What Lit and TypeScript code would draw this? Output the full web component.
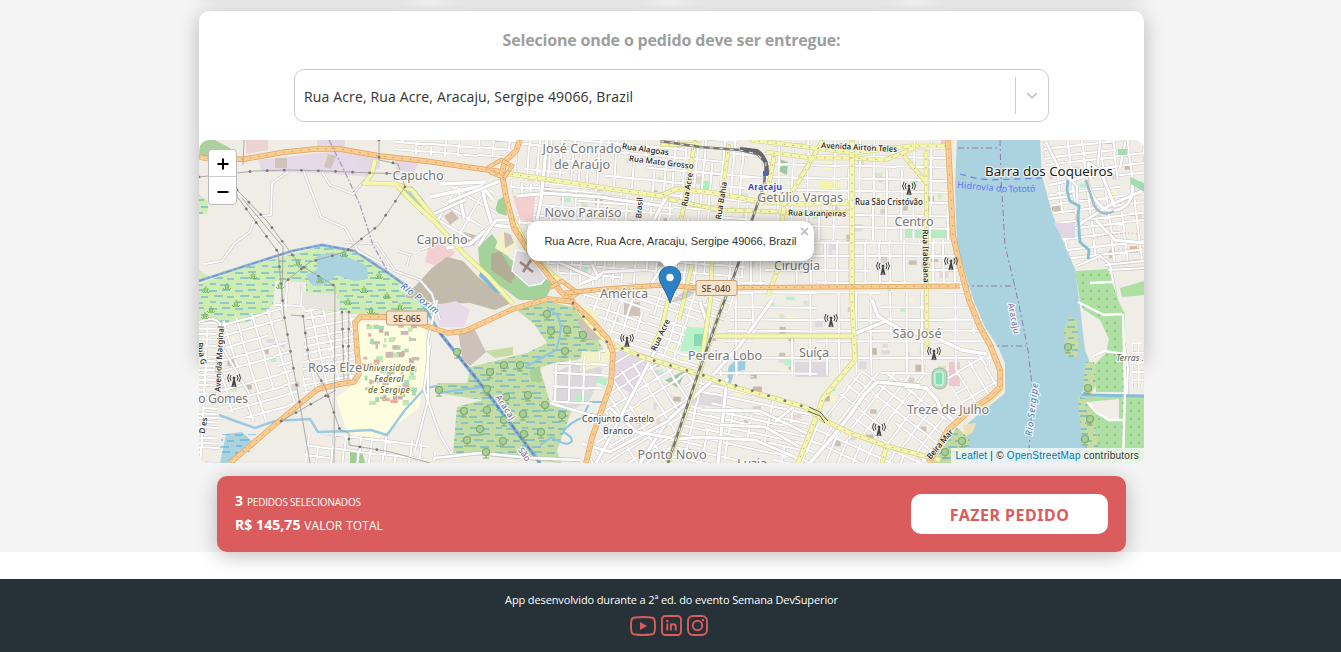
import { LitElement, html, svg, css } from "lit";
import { customElement } from "lit/decorators.js";

type Zone = { p: string; a: number; sx: number; sy: number; seed: number };
type Road = { d: string; w: number };
type Label = { t: string; x: number; y: number; k?: string; r?: number; l?: number };

const random = (seed: number) => () => {
  seed = (seed * 1664525 + 1013904223) % 4294967296;
  return seed / 4294967296;
};

const zones: Zone[] = [
  { p: "395,140 520,140 500,160 395,153", a: 4, sx: 13, sy: 9, seed: 1 },
  { p: "522,140 735,140 766,160 755,215 728,212 510,178", a: 5, sx: 10, sy: 11, seed: 2 },
  { p: "510,181 755,214 742,284 575,285 545,262 518,222", a: 4, sx: 12, sy: 9, seed: 3 },
  { p: "775,140 947,140 954,240 780,240 760,190", a: 1, sx: 14, sy: 12, seed: 4 },
  { p: "750,240 953,240 962,285 735,285", a: 0, sx: 13, sy: 13, seed: 5 },
  { p: "738,292 972,292 1000,365 927,375 852,375 715,378", a: 0, sx: 16, sy: 14, seed: 6 },
  { p: "578,291 738,291 700,370 615,340", a: 18, sx: 12, sy: 8, seed: 7 },
  { p: "612,345 697,376 667,463 590,463 605,415", a: -32, sx: 12, sy: 10, seed: 8 },
  { p: "697,378 812,412 797,463 668,463", a: 12, sx: 18, sy: 8, seed: 9 },
  { p: "858,372 927,376 950,428 925,463 905,453 823,415", a: -52, sx: 12, sy: 12, seed: 10 },
  { p: "814,420 925,463 798,463", a: 24, sx: 12, sy: 10, seed: 11 },
  { p: "945,378 980,352 1000,372 992,395 965,408", a: -30, sx: 13, sy: 9, seed: 12 },
  { p: "1042,140 1144,140 1144,262 1070,262 1052,210", a: -7, sx: 16, sy: 9, seed: 13 },
  { p: "218,322 280,306 300,400 262,425 215,405", a: -16, sx: 14, sy: 10, seed: 14 },
  { p: "305,308 354,312 354,380 318,388 302,395", a: -12, sx: 12, sy: 9, seed: 15 },
  { p: "305,434 365,436 420,440 450,463 305,463", a: 7, sx: 12, sy: 11, seed: 16 },
  { p: "199,320 216,318 219,463 199,463", a: 3, sx: 22, sy: 5, seed: 17 },
  { p: "275,283 300,281 304,308 275,308", a: 3, sx: 5, sy: 30, seed: 18 },
  { p: "553,364 605,350 610,380 590,405 552,404", a: 3, sx: 17, sy: 14, seed: 19 },
  { p: "444,190 480,178 505,205 470,240 435,222", a: 30, sx: 22, sy: 17, seed: 20 },
  { p: "1132,342 1144,342 1144,388 1132,388", a: 0, sx: 6, sy: 9, seed: 21 },
];

/* Streets of one district: two families of nearly parallel lines with some segments left out. */
const streetPath = (z: Zone) => {
  const pts = z.p.split(" ").map((q) => q.split(",").map(Number));
  const xs = pts.map((q) => q[0]);
  const ys = pts.map((q) => q[1]);
  const cx = (Math.min(...xs) + Math.max(...xs)) / 2;
  const cy = (Math.min(...ys) + Math.max(...ys)) / 2;
  const r = Math.hypot(Math.max(...xs) - cx, Math.max(...ys) - cy) + 20;
  const rnd = random(z.seed * 977);
  const t = (z.a * Math.PI) / 180;
  const at = (x: number, y: number) =>
    `${(cx + x * Math.cos(t) - y * Math.sin(t)).toFixed(1)} ${(cy + x * Math.sin(t) + y * Math.cos(t)).toFixed(1)}`;
  const out: string[] = [];
  for (let y = -r; y < r; y += z.sy * (0.75 + rnd() * 0.5)) {
    for (let x = -r; x < r; x += z.sx * 4) {
      if (rnd() > 0.12) out.push(`M${at(x, y)}L${at(x + z.sx * 4, y + rnd() * 1.2)}`);
    }
  }
  for (let x = -r; x < r; x += z.sx * (0.75 + rnd() * 0.5)) {
    for (let y = -r; y < r; y += z.sy * 3) {
      if (rnd() > 0.2) out.push(`M${at(x, y)}L${at(x + rnd() * 1.2, y + z.sy * 3)}`);
    }
  }
  return out.join("");
};

const lanes: Road[] = [
  { d: "M205 264 L222 261 L235 243 L250 232 L255 217 L271 215 L272 183 L288 172 M304 172 L321 217 L345 228 L358 251 L395 271 L420 280 L432 294 L440 320", w: 1.8 },
  { d: "M322 172 L330 185 L353 194 L365 180 M345 242 L377 244 L395 271 M398 251 L410 255 L407 266 M420 250 L437 244", w: 1.6 },
  { d: "M199 322 Q215 315 220 324 L224 345 L216 372 M224 350 L250 395 M437 300 L428 340 L428 400 L415 450 M430 345 L424 390 L440 435 L452 455", w: 2 },
  { d: "M430 197 L482 186 L493 200 M440 184 L485 182 M486 205 L492 225 L470 244 L447 248 M492 225 L510 227 M458 188 L464 218 M482 187 L486 205", w: 3.4 },
  { d: "M448 202 L500 181 M431 215 L465 200 M478 246 L496 220 L515 220", w: 3 },
  { d: "M547 140 L541 200 L537 220 M543 193 L600 197 L662 206 M517 196 L540 194 M665 199 L654 220", w: 3.2 },
  { d: "M558 262 L596 279 L603 272 L640 270 M592 264 L598 277 L580 284 M660 270 L650 286 M700 302 L712 338", w: 3 },
  { d: "M872 300 L878 316 L886 321 L905 332 L930 335 L962 350 L986 354 M886 321 L854 334", w: 3.4 },
  { d: "M877 382 L864 395 L850 415 L830 440 L810 463 M877 382 L920 386 M905 386 L926 388 L937 400 L941 410 L955 422", w: 3.6 },
  { d: "M772 300 L740 345 L713 375 M727 378 L718 463 M715 378 L668 420 L640 463", w: 3.2 },
  { d: "M701 410 L760 411 L808 434 M720 425 L765 427 L798 446 M775 422 L792 408 M670 440 L700 437 L755 440 L795 457", w: 2.8 },
  { d: "M655 351 L640 380 L624 410 L609 440 L596 463 M610 408 L637 432 L672 438 M583 444 L610 452 L670 420", w: 3 },
  { d: "M435 458 L480 453 L530 458 L580 460 M550 403 L590 415 L640 422", w: 2.6 },
  { d: "M1077 266 L1100 256 L1110 264 L1128 368 L1123 463 M1078 302 L1104 315 L1122 314 M1093 356 L1105 351 L1124 354 M1087 402 L1096 412 L1109 420 L1123 420 M1105 265 L1144 261 M1108 270 L1144 268", w: 2.2 },
  { d: "M1091 179 Q1082 150 1102 175 L1115 207 M1132 180 Q1136 208 1112 211 Q1096 210 1086 180 M1078 225 L1110 205 L1144 190 M1096 220 L1115 240 L1144 243", w: 3 },
  { d: "M1050 185 L1085 177 M1048 199 L1072 196 M1046 142 L1060 170 L1077 186 L1078 222 M1100 143 L1098 164 M1125 143 L1120 168", w: 2.4 },
];

const yellow: Road[] = [
  { d: "M375 160 L372 173 L365 183 L396 184 L412 190 L426 208 L438 223", w: 3.8 },
  { d: "M397 186 L418 207 L436 223 L464 254 L488 276 L513 304", w: 3.8 },
  { d: "M503 173 L545 179 L605 188 L660 196 L676 189 L715 193 L757 201 L800 204 L852 203", w: 4 },
  { d: "M668 199 L720 210 L758 211 L800 213 L852 212", w: 3.2 },
  { d: "M510 212 L528 248 L545 268 L562 282", w: 3.2 },
  { d: "M660 145 L702 144 M695 140 L691 165 L684 205 L681 220 M729 144 L724 180 L718 220", w: 3.2 },
  { d: "M750 140 L815 148 L854 153 L910 146 L948 146 M765 152 L812 158 L852 158 L885 160 L905 152 L918 146 M823 140 L811 160 L799 181 L784 205 L781 235 L776 275 L768 295", w: 3.4 },
  { d: "M774 156 L770 180 L760 205 M926 150 L927 350 M903 155 L925 181", w: 3.4 },
  { d: "M852 140 L852 300 L855 360 L838 380 L823 398 L815 420 L798 463", w: 4 },
  { d: "M715 336 L853 336 M712 289 L700 372 L668 463", w: 3.6 },
  { d: "M668 300 L661 330 L651 350 M692 265 L679 320 M712 262 L711 285", w: 3.2 },
  { d: "M573 303 L590 325 L607 342 L642 357 L670 365 L699 374 L730 386 L805 407 L824 420 L850 433 L890 447 L940 460 M886 448 L882 463", w: 3.8 },
  { d: "M699 374 L708 347 L724 300", w: 3.4 },
];

const orange: Road[] = [
  { d: "M199 157 L216 160 L245 159 L285 152 L315 149 L340 149 L380 156 L425 161 L460 166 L503 172", w: 4.2 },
  { d: "M520 140 L516 151 L505 161 L502 173 L506 197 L514 228 L530 253 L549 276 L560 291 L573 303 L592 321 L608 339 L613 353 L611 383 L601 412 L592 438 L586 463", w: 4.4 },
  { d: "M487 168 L501 160 L512 166 L504 178 L490 172 M550 288 L562 281 L578 293 L565 302", w: 3 },
  { d: "M230 463 L278 422 L318 389 L340 384 L354 382 L359 374 L355 323 L360 317 L398 317 L432 328 L448 333 L465 331 L513 309 L548 299 L575 302", w: 4.2 },
  { d: "M565 293 L605 289 L662 285 L700 288 L960 286", w: 3.6 },
  { d: "M948 140 L950 180 L953 236 L961 270 L969 300 L980 327 L990 345 L1000 370 L1000 387 L990 397 L970 410 L948 430 L929 463", w: 4.6 },
];

const labels: Label[] = [
  { t: "José Conrado", x: 582, y: 153, l: 79 }, { t: "de Araújo", x: 582, y: 169, l: 56 },
  { t: "Capucho", x: 418, y: 180, l: 51 }, { t: "Capucho", x: 442, y: 244, l: 51 },
  { t: "Novo Paraíso", x: 583, y: 217, l: 77 }, { t: "Getúlio Vargas", x: 800, y: 202, l: 86 },
  { t: "Centro", x: 914, y: 226, l: 39 }, { t: "Cirurgia", x: 797, y: 270, l: 46 },
  { t: "América", x: 624, y: 298, l: 48 }, { t: "Pereira Lobo", x: 725, y: 360, l: 74 },
  { t: "Suíça", x: 814, y: 357, l: 30 }, { t: "São José", x: 917, y: 338, l: 49 },
  { t: "Treze de Julho", x: 948, y: 414, l: 82 }, { t: "Ponto Novo", x: 672, y: 459, l: 69 },
  { t: "Rosa Elze", x: 335, y: 372, l: 54 }, { t: "o Gomes", x: 223, y: 403, l: 50 },
  { t: "Luzia", x: 752, y: 468, l: 30 },
  { t: "Barra dos Coqueiros", x: 1049, y: 176, k: "town", l: 128 },
  { t: "Conjunto Castelo", x: 618, y: 422, k: "dark", l: 72 }, { t: "Branco", x: 618, y: 434, k: "dark", l: 30 },
  { t: "Rua Alagoas", x: 645, y: 152, k: "street", r: 8 }, { t: "Rua Mato Grosso", x: 661, y: 165, k: "street", r: 7, l: 65 },
  { t: "Avenida Airton Teles", x: 859, y: 150, k: "street", r: 3, l: 76 },
  { t: "Rua São Cristóvão", x: 889, y: 205, k: "street", l: 68 }, { t: "Rua Laranjeiras", x: 817, y: 216, k: "street", l: 58, r: 1 },
  { t: "Rua Acre", x: 690, y: 190, k: "street", r: -80, l: 34 }, { t: "Rua Bahia", x: 724, y: 201, k: "street", r: -81, l: 38 },
  { t: "Brasil", x: 642, y: 208, k: "street", r: -86, l: 21 }, { t: "Rua Acre", x: 663, y: 336, k: "street", r: -65, l: 34 },
  { t: "Rua Itabaiana", x: 923, y: 256, k: "street", r: 89, l: 53 }, { t: "Beira Mar", x: 942, y: 446, k: "street", r: -50, l: 36 },
  { t: "Avenida Marginal", x: 222, y: 359, k: "street", r: -87, l: 66 }, { t: "Rua G", x: 199, y: 354, k: "street", r: 80 },
  { t: "D es", x: 206, y: 426, k: "street", r: -80 },
  { t: "Universidade", x: 389, y: 371, k: "campus", l: 52 }, { t: "Federal", x: 389, y: 382, k: "campus", l: 29 }, { t: "de Sergipe", x: 389, y: 393, k: "campus", l: 42 },
  { t: "Aracaju", x: 765, y: 190, k: "station", l: 34 },
  { t: "Hidrovia do", x: 982, y: 190, k: "ferry", r: 5, l: 50 }, { t: "Tototó", x: 1022, y: 192, k: "ferry", r: -1, l: 27 },
  { t: "Rio Sergipe", x: 1035, y: 410, k: "water", r: -83, l: 53 }, { t: "Rio Poxim", x: 418, y: 301, k: "water", r: 37, l: 45 },
  { t: "Aracaju", x: 1011, y: 319, k: "limit", r: 79, l: 31 }, { t: "Aracaj", x: 503, y: 409, k: "limit", r: 56, l: 28 }, { t: "São", x: 522, y: 456, k: "limit", r: 55 },
  { t: "Terras .", x: 1130, y: 361, k: "place" },
];

const trees = [[547, 315], [551, 332], [567, 331], [583, 336], [565, 352], [504, 366], [520, 366], [490, 373], [506, 398], [528, 396], [545, 406], [562, 416], [464, 412], [487, 411], [504, 421], [523, 415], [480, 430], [467, 441], [503, 442], [524, 435], [541, 433], [486, 453], [487, 390], [457, 353], [1068, 348], [1088, 389], [1090, 420], [1085, 440], [945, 453], [962, 442], [439, 391]];
const masts = [[909, 188], [883, 268], [831, 320], [627, 340], [951, 263], [934, 353], [879, 429], [234, 380]];
const grass = [[206, 289], [227, 286], [280, 285], [253, 275], [320, 279], [379, 275], [364, 289], [387, 295], [344, 253], [298, 262], [211, 309], [236, 303], [400, 306], [348, 301], [371, 310], [205, 315]];

const line = (r: Road, fill: string, edge: string) => svg`
  <path d=${r.d} fill="none" stroke=${edge} stroke-width=${r.w + 1.2}></path>
  <path d=${r.d} fill="none" stroke=${fill} stroke-width=${r.w}></path>`;

const blocks = () => {
  const rnd = random(4211);
  const tints = ["#d9d0c9", "#ccc0b6", "#e9d6d4", "#d7e8c6", "#f7f7c4", "#dedbe0", "#c8b8aa", "#b9f0cc"];
  const areas = [[530, 145, 220, 130], [775, 145, 165, 310], [600, 300, 120, 150], [735, 295, 90, 130], [222, 325, 110, 80], [1048, 145, 90, 110]];
  return areas.flatMap(([x, y, w, h]) =>
    Array.from({ length: Math.round((w * h) / 750) }, () => svg`<rect x=${(x + rnd() * w).toFixed(1)} y=${(y + rnd() * h).toFixed(1)}
      width=${(3 + rnd() * 6).toFixed(1)} height=${(3 + rnd() * 5).toFixed(1)} fill=${tints[Math.floor(rnd() * tints.length)]}></rect>`));
};

const campus = () => {
  const rnd = random(88);
  return Array.from({ length: 70 }, () => svg`<rect x=${(362 + rnd() * 50).toFixed(1)} y=${(323 + rnd() * 78).toFixed(1)}
    width=${(2 + rnd() * 6).toFixed(1)} height=${(2 + rnd() * 4).toFixed(1)} fill=${["#ccbcae", "#c6b3a6", "#f5a9a0", "#bfe8b5", "#a8dab5"][Math.floor(rnd() * 5)]}></rect>`);
};

@customElement("street-map")
export class StreetMap extends LitElement {
  static styles = css`
    :host { display: block; width: 945px; height: 323px; }
    svg { display: block; }
    text {
      font-family: "Noto Sans", "Open Sans", sans-serif;
      font-size: 12.6px; fill: #777; text-anchor: middle;
      paint-order: stroke; stroke: #fff; stroke-opacity: 0.75; stroke-width: 2.6px; stroke-linejoin: round;
    }
    .town { font-size: 13.4px; fill: #222; }
    .dark { font-size: 9px; fill: #333; }
    .street { font-size: 8px; fill: #222; stroke-opacity: 0.55; stroke-width: 2px; font-weight: 500; }
    .campus { font-size: 8.6px; fill: #6b6322; font-style: italic; font-weight: 500; }
    .station { font-size: 9px; fill: #3f49b5; font-weight: 700; }
    .ferry { font-size: 9px; fill: #6672f0; stroke-width: 0; }
    .water { font-size: 9.4px; fill: #4377b5; font-style: italic; }
    .limit { font-size: 8.6px; fill: #80609a; }
    .place { font-size: 8.6px; fill: #555; font-style: italic; }
    .shield { font-size: 9px; fill: #58402a; stroke: none; font-weight: 500; }
  `;

  render() {
    return html`<svg width="945" height="323" viewBox="199 140 945 323">
      <defs>
        <pattern id="marsh" width="26" height="18" patternUnits="userSpaceOnUse">
          <path d="M1 3H9M14 2H22M6 8H15M19 9H26M2 14H8M12 15H21" stroke="#4da6dd" stroke-width="1"></path>
        </pattern>
        <pattern id="orchard" width="8" height="8" patternUnits="userSpaceOnUse">
          <circle cx="3" cy="3" r=".8" fill="#6ba657"></circle>
        </pattern>
        <g id="grass"><path d="M-4 2L-2 4M-2-1L-1 4M0-3V4M2-1L1 4M4 2L2 4" stroke="#74b75a" stroke-width="1"></path></g>
        <g id="tree"><circle r="3.5" cy="-1" fill="#a8cf98" stroke="#7fab70" stroke-width="1.2"></circle><path d="M0 2V5M-3 5H3" stroke="#7fab70" stroke-width="1.1"></path></g>
        <g id="mast" fill="none" stroke="#444" stroke-width="1"><path d="M0-3V7M-2 7L0-1L2 7" stroke-width="1.2"></path><circle cy="-2" r="1" fill="#444"></circle><path d="M-3-5Q-5-2-3 1M3-5Q5-2 3 1M-5-6Q-8-2-5 2M5-6Q8-2 5 2"></path></g>
        ${zones.map((z) => svg`<clipPath id=${"z" + z.seed}><polygon points=${z.p}></polygon></clipPath>`)}
      </defs>
      <rect x="199" y="140" width="945" height="323" fill="#f0ede6"></rect>

      <path d="M199 158L213 163L234 160L230 148L215 140H200Z" fill="#add19e"></path>
      <path d="M246 140H268V150L246 154Z" fill="#ecd3d3"></path>
      <path d="M258 160L340 151L378 158L371 177L322 173L262 172Z" fill="#e5d9e7"></path>
      <path d="M275 158H287V168H275ZM328 154L336 156L331 169L324 167Z" fill="#d0c3b9"></path>
      <path d="M317 140H345V148L317 146ZM356 150L380 154V169L356 166ZM395 156L420 161L414 172L396 170Z" fill="#e3d9e6"></path>
      <path d="M430 238L455 252L443 268L425 262ZM660 140H680V150H660Z" fill="#f3cfd0"></path>
      <path d="M403 188L412 187L423 200L430 215L422 214Z" fill="#aad3df" stroke="#7cb0cf"></path>

      <path d="M199 195L209 201L207 214H199ZM199 284L245 267L322 246L360 254L390 275L420 297L438 310L425 318L345 313L306 308V282L275 281L273 305L262 316L244 323H199Z" fill="#cfecb3"></path>
      <path d="M199 195L209 201L207 214H199ZM199 284L245 267L322 246L360 254L390 275L420 297L438 310L425 318L345 313L306 308V282L275 281L273 305L262 316L244 323H199Z" fill="url(#marsh)"></path>
      <path d="M302 292L337 294L340 311L304 308Z" fill="#e8e5df"></path>
      <path d="M199 270L210 277L199 281Z" fill="#cfecb3"></path>
      <path d="M306 275L318 269L316 257Q335 248 350 258L367 266L368 279L355 281L336 275Q325 289 312 285Z" fill="#aad3df"></path>
      <path d="M199 281L245 266L292 251L322 245L355 251L388 273L415 292L440 333L483 387L540 463" fill="none" stroke="#84b5da" stroke-width="2.8"></path>
      <path d="M199 281L245 266L292 251L322 245L355 251L388 273L415 292" fill="none" stroke="#8461a0" stroke-opacity=".5" stroke-width="1.2" stroke-dasharray="6 3 2 3"></path>

      <path d="M405 297L432 268L447 257L463 261L478 277L511 303L495 310L470 303L435 304Z" fill="#c2baaa"></path>
      <path d="M434 306L456 301L470 310L464 327L440 327Z" fill="#e7dbe8"></path>
      <path d="M458 331L474 328L486 352L470 366L462 358Z" fill="#cdc1ba"></path>
      <path d="M478 247L492 234L510 259L540 274L553 284L545 300L519 300L480 270Z" fill="#a3d29b"></path>
      <path d="M491 254L500 251L515 275L511 284L491 270Z" fill="#b4ad95"></path>
      <path d="M481 270L511 298L495 292L479 276Z" fill="#7fb6dc"></path>
      <path d="M516 250L527 252L546 278L541 284L529 286L512 271Z" fill="#dfdce0" stroke="#fff" stroke-width="1.3"></path>
      <path d="M520 262L533 272M531 260L523 272" stroke="#9b8680" stroke-width="2.6"></path>
      <path d="M500 234L507 231L517 243L508 256L495 248Z" fill="#f5f1c8"></path>
      <path d="M504 232L511 235L514 243L505 248ZM444 216L452 211L459 218L450 225ZM464 232L478 236L474 246L460 240Z" fill="#cdbfb4"></path>
      <circle cx="492" cy="225" r="3.4" fill="#9edbb0" stroke="#fff" stroke-width="1.6"></circle>
      <path d="M498 200L505 196L507 216L495 212Z" fill="#a3d29b"></path>

      <path d="M358 322L420 320L427 334V365L419 408L378 438L348 435L336 398L352 386L360 374Z" fill="#fffde0"></path>
      ${campus()}
      <path d="M226 434L242 432L253 442L244 452L228 463H220Z" fill="#aad3df"></path>
      <path d="M222 434L262 434L250 452L228 458L219 452Z" fill="url(#marsh)"></path>
      <path d="M219 415L238 422L255 428L275 421L310 419L318 432L352 431L371 430L387 435L405 410L425 388L437 386" fill="none" stroke="#9bcbe0" stroke-width="2.4"></path>
      <path d="M350 452L361 448L365 463H350Z" fill="#a3cf95"></path>

      <path d="M517 310L547 301L580 309L603 349L577 360L553 363L540 368L550 403L573 407L557 450L561 463L453 453L457 407L483 400L437 393L437 383L467 383L470 367L527 353L547 343L535 325Z" fill="#c4dda4"></path>
      <path d="M485 351L513 347L513 355L495 358Z" fill="#c4dda4"></path>
      <path d="M517 310L547 301L580 309L603 349L577 360L553 363L540 368L550 403L573 407L557 450L561 463L453 453L457 407L483 400L437 393L437 383L467 383L470 367L527 353L547 343L535 325Z" fill="url(#marsh)"></path>
      <path d="M547 307L558 316Q564 328 556 350L525 367M437 393L483 387M540 445L552 437Q567 448 572 441Q572 436 563 432Q570 422 582 418L590 402H604" fill="none" stroke="#8ec5e2" stroke-width="2"></path>
      <path d="M440 333L483 387L540 463" stroke="#76acd9" stroke-width="3.6" fill="none"></path>
      <path d="M440 333L483 387L540 463" stroke="#79649a" stroke-width="1.2" stroke-dasharray="5 3 2 3" fill="none"></path>
      <path d="M530 370L540 366L541 383L531 381Z" fill="#a9d097"></path>
      <path d="M556 372L578 362L603 368L590 400L576 408L552 403Z" fill="#dcd9dc"></path>
      <path d="M615 345L650 356L632 395L608 378Z" fill="#e5d7e6"></path>
      <path d="M577 320L590 315L605 340L585 339ZM624 302H640V316H624Z" fill="#cfc2bc"></path>
      <path d="M577 307L598 309V334L588 325ZM582 351L606 352L604 365L580 372Z" fill="#f5f2c8"></path>
      <path d="M576 395L588 394V404L575 405ZM598 376L608 379L605 386L596 382Z" fill="#b5f0c6"></path>

      ${blocks()}
      <path d="M665 380L686 370L678 388ZM779 159L788 162L787 175L778 171Z" fill="#9ccaa2"></path>
      <path d="M700 181H712V192H700Z" fill="#aaf0c1"></path>
      <path d="M820 181H839V190H820Z" fill="#f6f4ac"></path>
      <path d="M905 230H949V238H905Z" fill="#b6ecc1"></path>
      <path d="M795 362H829V377H795ZM694 393L724 395L720 407L690 404Z" fill="#dcdadd"></path>
      <path d="M729 366L746 352L745 370L734 372L731 383H727L728 370Z" fill="#9bcce2"></path>
      <path d="M949 362H960V386H949ZM941 140H945V146H941Z" fill="#f2c7cb"></path>

      ${zones.map((z) => svg`<g clip-path=${`url(#z${z.seed})`} fill="none">
        <path d=${streetPath(z)} stroke="#cbc7c7" stroke-width="3.1"></path>
        <path d=${streetPath(z)} stroke="#fff" stroke-width="2.1"></path>
      </g>`)}
      <path d="M513 196L535 197L533 222L520 220Z" fill="#f3cfd0"></path>
      <path d="M687 327L711 328L703 353L680 351Z" fill="#b7f2ca"></path>
      <path d="M694 334H704V346H694Z" fill="#8bd9b0"></path>
      ${lanes.map((r) => line(r, "#fff", "#c9c6c6"))}

      <path d="M957 140H1040L1042 176L1052 213L1062 239L1075 269L1080 307L1085 350L1090 363L1082 393L1082 433L1088 463H962L965 447L968 423L988 407L1005 393V363L998 347L985 327L973 299L957 246L955 186Z" fill="#aad3df"></path>
      <path d="M963 425L976 423L973 432L965 437ZM965 408L990 397L998 388L1004 390L987 406L968 416Z" fill="#efdfb4"></path>
      <path d="M957 427L970 440L968 463H933Z" fill="#c2d99f"></path>
      <path d="M1075 271L1108 269L1118 300L1125 314L1124 392L1096 392L1094 365L1106 353L1107 337L1085 315L1080 300ZM1095 397H1144V463H1088L1084 430L1083 397ZM1120 288L1144 281V295L1122 297Z" fill="#aedfa3"></path>
      <path d="M1075 271L1108 269L1118 300L1125 314L1124 392L1096 392L1094 365L1106 353L1107 337L1085 315L1080 300ZM1095 397H1144V463H1088Z" fill="url(#orchard)"></path>
      <path d="M1087 402L1119 399V421H1108ZM1080 307L1100 320L1109 339L1107 350L1090 354Z" fill="#f0ede6"></path>
      <path d="M1070 315L1077 321L1079 345L1077 358L1066 356L1064 330ZM1085 362L1094 362L1096 385L1091 394H1083ZM1077 396L1087 399L1096 425L1100 463H1088L1081 430Z" fill="#c5dda4"></path>
      <path d="M1070 315L1077 321L1079 345L1077 358L1066 356L1064 330ZM1085 362L1094 362L1096 385L1091 394H1083ZM1077 396L1087 399L1096 425L1100 463H1088L1081 430ZM957 427L970 440L968 463H933Z" fill="url(#marsh)"></path>
      <path d="M1070 201L1079 206L1078 217L1080 242L1089 250L1088 259M1070 202L1067 190L1068 180M1082 395L1144 396" stroke="#87bed5" stroke-width="2.8" fill="none"></path>
      <path d="M1086 180L1094 205Q1101 218 1114 211" stroke="#a2bac5" stroke-width="2.5" fill="none"></path>
      <path d="M1054 223H1075V238H1062Z" fill="#e2d5e5"></path>
      <path d="M1118 149H1127V155H1118ZM1130 177L1144 183V192L1131 184Z" fill="#a5dbb3"></path>
      <path d="M1123 314L1125 390L1123 463M1078 302L1104 315L1122 314M1093 356L1105 351L1124 354M1087 402L1096 412L1109 420L1123 420M1090 283L1113 282" fill="none" stroke="#fff" stroke-width="2.4"></path>
      <path d="M1000 140L1001 178L1005 245L1018 300L1028 350L1033 395L1028 463M958 148H1000M963 286H1015M988 346H1026" fill="none" stroke="#9279ab" stroke-width="1" stroke-dasharray="6 3 2 3"></path>
      <path d="M960 174L975 178L990 180L1042 178" fill="none" stroke="#6c7bea" stroke-width="1.2" stroke-dasharray="6 5"></path>
      <path d="M1093 239Q1115 231 1140 234M1110 250L1144 248" fill="none" stroke="#f4a28e" stroke-width="1.2" stroke-dasharray="1 3"></path>

      ${yellow.map((r) => line(r, "#f6f7ae", "#cfd08e"))}
      ${orange.map((r) => line(r, "#fbcb8f", "#d9a560"))}
      ${[...orange, ...yellow.slice(2, 9), yellow[11]].map((r) => svg`<path d=${r.d} fill="none" stroke="#a58a78" stroke-width="1" stroke-dasharray="1.5 7" opacity=".7"></path>`)}

      <g fill="none">
        <path d="M660 141L700 147L740 150L757 154L766 163L764 185L752 220L743 250L734 276L720 312L698 374L668 463" stroke="#777" stroke-width="2.6"></path>
        <path d="M740 149L757 151Q768 158 767 175" stroke="#666" stroke-width="4"></path>
        <path d="M660 141L700 147L740 150L757 154L766 163L764 185L752 220L743 250L734 276L720 312L698 374L668 463" stroke="#ddd" stroke-width="1.2" stroke-dasharray="4 6"></path>
        <path d="M809 407L820 412L828 421M808 411L820 416L825 423" stroke="#645a49" stroke-width="1"></path>
      </g>
      <rect x="763" y="171" width="5" height="5" fill="#5665bb"></rect>

      <g fill="none" stroke="#9c9a98" stroke-width=".8">
        <path d="M199 177L255 171L289 170L327 171L372 173L410 174M237 190L267 221L300 265L335 286L334 463M236 195L278 252L284 315L300 405L310 463M242 198L283 247L282 300M405 187L379 225L345 252L310 262L285 282M244 140L243 165M379 140V160L398 164L405 187M291 315L303 316L309 360L325 387L340 430L349 433V445L391 452L430 463M342 312L344 380M349 312L348 380M281 421L336 390"></path>
        <path d="M199 177L255 171L289 170L327 171L372 173L410 174M237 190L267 221L300 265L335 286M236 195L278 252L284 315L300 405M405 187L379 225L345 252L310 262L285 282M379 140V160L398 164M303 316L309 360L325 387L340 430L349 433V445L391 452M342 312L344 380M349 312L348 380M281 421L336 390M573 303L590 325L607 342L642 357L699 374L805 407" stroke="#7b7877" stroke-width="2.7" stroke-linecap="round" stroke-dasharray=".1 17"></path>
        <path d="M329 140L345 172L360 205L373 245L388 272" stroke="#b39abb" stroke-width="1.3" stroke-dasharray="6 2 2 2"></path>
      </g>

      ${grass.map(([x, y]) => svg`<use href="#grass" x=${x} y=${y}></use>`)}
      ${trees.map(([x, y]) => svg`<use href="#tree" x=${x} y=${y}></use>`)}
      ${masts.map(([x, y]) => svg`<use href="#mast" x=${x} y=${y}></use>`)}
      <rect x="932" y="368" width="15" height="21" rx="7" fill="#b9d8bd" stroke="#9ab8a0"></rect>
      <rect x="935" y="372" width="8" height="13" rx="2" fill="#82dfb6" stroke="#e8fff2"></rect>

      ${labels.map((l) => svg`<text class=${l.k ?? ""} x=${l.x} y=${l.y} textLength=${l.l ?? "none"} transform=${`rotate(${l.r ?? 0} ${l.x} ${l.y})`}>${l.t}</text>`)}
      <rect x="696" y="280.500" width="41" height="15" rx="2" fill="#f5e2cd" stroke="#c79b70"></rect>
      <text class="shield" x="716" y="292" textLength="29">SE-040</text>
      <rect x="386.500" y="311" width="41" height="14" rx="2" fill="#f5e2cd" stroke="#c79b70"></rect>
      <text class="shield" x="407" y="321.500" textLength="28">SE-065</text>
    </svg>`;
  }
}

@customElement("app-root")
export class AppRoot extends LitElement {
  static styles = css`
    :host { display: block; height: 652px; overflow: hidden; background: #fff; font-family: "Open Sans", sans-serif; }
    * { box-sizing: border-box; }
    .page { height: 552px; background: #f4f4f4; display: flex; flex-direction: column; align-items: center; padding-left: 2px; }
    .products { width: 945px; height: 200px; margin-top: -212px; flex: none; display: grid; grid-template-columns: repeat(4, 220px); justify-content: space-between; }
    .product { background: #fff; border-radius: 10px; box-shadow: 0 4px 20px rgba(0, 0, 0, 0.25); }
    .delivery { width: 945px; height: 351px; flex: none; margin-top: 23px; background: #fff; border-radius: 10px; box-shadow: 0 4px 20px rgba(0, 0, 0, 0.25); display: flex; flex-direction: column; align-items: center; }
    h4 { margin: 18px 0 0; font-size: 16px; line-height: 22px; font-weight: 700; color: #9e9e9e; white-space: nowrap; letter-spacing: -0.17px; }
    .select { margin-top: 18px; width: 755px; height: 53px; flex: none; border: 1px solid #ccc; border-radius: 10px; display: flex; align-items: center; padding-left: 9px; }
    .value { flex: 1; font-size: 14px; line-height: 20px; color: #333; padding-top: 2px; letter-spacing: 0.14px; }
    .bar { width: 1px; height: 37px; background: #ccc; }
    .arrow { width: 32px; display: flex; justify-content: center; }
    .map { position: relative; margin-top: 18px; width: 945px; height: 323px; flex: none; border-radius: 10px; overflow: hidden; font-family: "Liberation Sans", Arial, sans-serif; }
    .zoom { position: absolute; left: 9px; top: 9px; width: 29px; height: 56px; border: 1px solid #bbb; border-radius: 4px; background: #fff; display: grid; grid-template-rows: 27px 27px; align-items: center; justify-items: center; }
    .zoom svg { display: block; position: relative; top: 1px; }
    .plus { width: 100%; height: 100%; border-bottom: 1px solid #ccc; display: grid; place-items: center; }
    .popup { position: absolute; left: 328px; top: 81px; width: 287px; height: 40px; border-radius: 12px; background: #fff; box-shadow: 0 3px 14px rgba(0, 0, 0, 0.4); display: flex; align-items: center; justify-content: center; font-size: 11px; line-height: 16px; color: #333; white-space: nowrap; letter-spacing: 0.03px; }
    .tip { position: absolute; left: 461px; top: 121px; }
    .close { position: absolute; right: 5px; top: 6px; }
    .pin { position: absolute; left: 459px; top: 125px; }
    .credit { position: absolute; right: 0; bottom: 0; height: 15px; padding: 0 5px; background: rgba(255, 255, 255, 0.7); font-size: 10px; line-height: 15px; color: #333; white-space: nowrap; letter-spacing: 0.25px; }
    .credit span { color: #0078a8; }
    .summary { position: relative; width: 909px; height: 76px; flex: none; margin-top: 114px; border-radius: 10px; background: #da5c5c; box-shadow: 0 4px 20px rgba(0, 0, 0, 0.25); display: flex; align-items: center; justify-content: space-between; padding: 0 18px; color: #fff; }
    .totals { display: flex; flex-direction: column; gap: 3px; margin-top: -1px; }
    .row { font-size: 12px; line-height: 20px; white-space: nowrap; letter-spacing: 0.05px; word-spacing: 0.7px; }
    .row b { font-size: 14px; letter-spacing: 0.06px; word-spacing: 0; }
    .small { font-size: 10px; letter-spacing: -0.2px; word-spacing: 0; }
    .order { width: 197px; height: 40px; border-radius: 10px; background: #fff; color: #da5c5c; font: 700 16px/43px "Noto Sans", sans-serif; text-align: center; letter-spacing: 0.5px; }
    footer { margin-top: 27px; height: 73px; background: #263238; display: flex; flex-direction: column; align-items: center; padding: 13px 0 0 2px; color: #fff; font-size: 11px; line-height: 16px; letter-spacing: -0.12px; }
    .social { display: flex; align-items: center; gap: 5px; margin: 7px 5px 0 0; }
    .social svg { display: block; }
  `;

  render() {
    return html`
      <main class="page">
        <div class="products">${[0, 1, 2, 3].map(() => html`<div class="product"></div>`)}</div>
        <section class="delivery">
          <h4>Selecione onde o pedido deve ser entregue:</h4>
          <div class="select">
            <span class="value">Rua Acre, Rua Acre, Aracaju, Sergipe 49066, Brazil</span>
            <span class="bar"></span>
            <span class="arrow"><svg width="12" height="8" viewBox="0 0 12 8"><path d="M1.700 1.700L6 5.800L10.300 1.700" fill="none" stroke="#ccc" stroke-width="2" stroke-linecap="round" stroke-linejoin="round"></path></svg></span>
          </div>
          <div class="map">
            <street-map></street-map>
            <div class="popup">
              Rua Acre, Rua Acre, Aracaju, Sergipe 49066, Brazil
              <svg class="close" width="9" height="9" viewBox="0 0 9 9"><path d="M1 1L8 8M8 1L1 8" stroke="#bbb" stroke-width="1.700"></path></svg>
            </div>
            <svg class="tip" width="20" height="9" viewBox="0 0 20 9"><path d="M0 0H20L12 8Q10 9 8 8Z" fill="#fff"></path></svg>
            <svg class="pin" width="44" height="40" viewBox="0 0 44 40">
              <path d="M13 37Q25 24 36 24Q40 27 32 31Q22 37 13 37" fill="#000" opacity=".12"></path>
              <path d="M12 1.500C5 1.500 1.200 6.500 1.200 12C1.200 19 7 23 12 38C17 23 22.800 19 22.800 12C22.800 6.500 19 1.500 12 1.500Z" fill="#2a81c4" stroke="#2a659c"></path>
              <circle cx="12" cy="12.500" r="3.700" fill="#fff"></circle>
            </svg>
            <div class="zoom">
              <span class="plus"><svg width="12" height="12" viewBox="0 0 12 12"><path d="M6 0.500V11.500M0.500 6H11.500" stroke="#000" stroke-width="2"></path></svg></span>
              <svg width="12" height="12" viewBox="0 0 12 12"><path d="M0.500 6H11.500" stroke="#000" stroke-width="2"></path></svg>
            </div>
            <div class="credit"><span>Leaflet</span> | © <span>OpenStreetMap</span> contributors</div>
          </div>
        </section>
        <section class="summary">
          <div class="totals">
            <div class="row"><b>3</b> <span class="small">PEDIDOS SELECIONADOS</span></div>
            <div class="row"><b>R$ 145,75</b> VALOR TOTAL</div>
          </div>
          <div class="order">FAZER PEDIDO</div>
        </section>
      </main>
      <footer>
        <div>App desenvolvido durante a 2ª ed. do evento Semana DevSuperior</div>
        <div class="social">
          <svg width="26" height="20" viewBox="0 0 26 20"><path d="M5 1.500Q13 .5 21 1.500Q24.500 1.700 24.700 5Q25.300 10 24.700 15Q24.500 18.300 21 18.500Q13 19.500 5 18.500Q1.500 18.300 1.300 15Q.7 10 1.300 5Q1.500 1.700 5 1.500Z" fill="none" stroke="#da5c5c" stroke-width="1.900"></path><path d="M10 6L17 10L10 14Z" fill="#da5c5c"></path></svg>
          <svg width="21" height="21" viewBox="0 0 21 21"><rect x="1" y="1" width="19" height="19" rx="3.500" fill="none" stroke="#da5c5c" stroke-width="1.900"></rect><path d="M6.300 8.500V15.500M9.900 8.500V15.500M9.900 11.500Q10 9.200 12.300 9.200Q14.800 9.200 14.800 12V15.500" fill="none" stroke="#da5c5c" stroke-width="1.900"></path><circle cx="6.300" cy="6" r="1.200" fill="#da5c5c"></circle></svg>
          <svg width="21" height="21" viewBox="0 0 21 21"><rect x="1" y="1" width="19" height="19" rx="5" fill="none" stroke="#da5c5c" stroke-width="1.900"></rect><circle cx="10.500" cy="10.500" r="4.700" fill="none" stroke="#da5c5c" stroke-width="1.900"></circle><circle cx="16" cy="5" r="1.200" fill="#da5c5c"></circle></svg>
        </div>
      </footer>`;
  }
}
